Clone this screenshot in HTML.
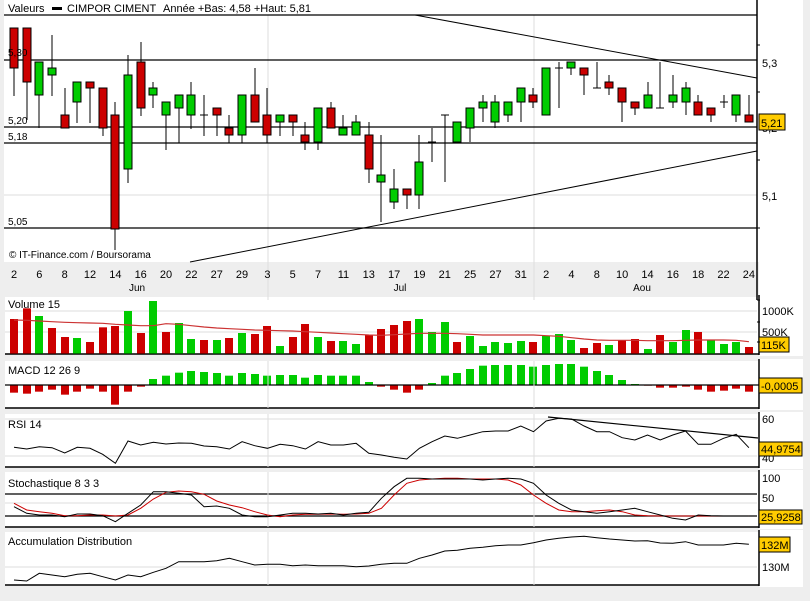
<!DOCTYPE html>
<html><head><meta charset="utf-8"><style>
body{margin:0;background:#eeeeee;width:810px;height:601px;overflow:hidden;font-family:"Liberation Sans",sans-serif}
svg{position:absolute;left:0;top:0}
text{font-family:"Liberation Sans",sans-serif;font-size:11px;fill:#000}
</style></head><body>
<svg id="s" width="810" height="601" xmlns="http://www.w3.org/2000/svg"></svg>
<script>
var o=[];
function X(i){return 14+12.67*i}
function r(x,y,w,h,f){o.push('<rect x="'+x+'" y="'+y+'" width="'+w+'" height="'+h+'" fill="'+f+'"/>')}
function l(x1,y1,x2,y2,c,w){o.push('<line x1="'+x1+'" y1="'+y1+'" x2="'+x2+'" y2="'+y2+'" stroke="'+(c||'#000')+'" stroke-width="'+(w||1)+'"/>')}
function t(x,y,s,a){o.push('<text x="'+x+'" y="'+y+'"'+(a||'')+'>'+s+'</text>')}
function pl(pts,c,w){o.push('<polyline fill="none" stroke="'+c+'" stroke-width="'+(w||1)+'" points="'+pts.join(' ')+'"/>')}
var R='#cc0000',G='#00cc00';
// backgrounds
r(4,0,756,262,'#fff');r(4,262,756,33,'#eeeeee');r(759,0,44,300,'#fff');
[[297,354],[361,408],[414,467],[472,527],[532,585]].forEach(function(p){r(5,p[0],754,p[1]-p[0],'#fff');r(759,p[0]-2,44,p[1]-p[0]+4,'#fff');l(759,p[0]-2,759,p[1]+1,'#000',1.5);l(5,p[1],759,p[1],'#000',1.5)});
// main grid
l(268,15,268,300,'#ddd');l(534,15,534,300,'#ddd');l(4,195,757,195,'#ddd');
l(757,0,757,300,'#000',1.5);
[15,60,127,143,228].forEach(function(y){l(4,y,757,y,'#000',1.2)});
l(415,15,757,78,'#000',1);l(190,262,757,151,'#000',1);
// candles
var C=[[28,68,28,96,'r'],[28,82,28,120,'r'],[62,95,62,128,'g'],[68,75,35,96,'g'],[115,128,88,128,'r'],[82,102,82,123,'g'],[82,88,82,123,'r'],[88,128,88,136,'r'],[115,229,102,250,'r'],[75,169,55,183,'g'],[62,108,42,116,'r'],[88,95,82,108,'g'],[102,115,102,150,'g'],[95,108,95,143,'g'],[95,115,82,129,'g'],[115,115,95,136,'x'],[108,115,108,136,'r'],[128,135,115,143,'r'],[95,135,95,143,'g'],[95,122,68,122,'r'],[115,135,88,143,'r'],[115,122,115,136,'g'],[115,122,115,136,'r'],[135,142,122,150,'r'],[108,142,108,150,'g'],[108,128,102,128,'r'],[128,135,115,135,'g'],[122,135,115,135,'g'],[135,169,122,183,'r'],[175,182,135,222,'g'],[189,202,169,209,'g'],[189,195,189,209,'r'],[162,195,135,209,'g'],[142,142,128,162,'x'],[115,115,115,182,'x'],[122,142,122,142,'g'],[108,128,108,142,'g'],[102,108,95,122,'g'],[102,122,95,128,'g'],[102,115,102,122,'g'],[88,102,88,122,'g'],[95,102,88,108,'r'],[68,115,68,115,'g'],[68,68,62,108,'x'],[62,68,62,75,'g'],[68,75,68,95,'r'],[88,88,62,88,'x'],[82,88,75,95,'r'],[88,102,88,122,'r'],[102,108,102,115,'r'],[95,108,82,108,'g'],[108,108,62,108,'x'],[95,102,75,108,'g'],[88,102,82,115,'g'],[102,115,95,115,'r'],[108,115,108,122,'r'],[102,102,95,108,'x'],[95,115,95,122,'g'],[115,122,95,122,'r']];
C.forEach(function(c,i){var x=Math.round(X(i));l(x,c[2],x,c[3]);if(c[4]=='x'){l(x-4,c[0],x+4,c[0])}else{o.push('<rect x="'+(x-4)+'" y="'+c[0]+'" width="8" height="'+Math.max(c[1]-c[0],2)+'" fill="'+(c[4]=='r'?R:G)+'" stroke="#000" stroke-width="1"/>')}});
// texts main
t(8,12,'Valeurs');r(52,7,10,3,'#000');t(67,12,'CIMPOR CIMENT');t(163,12,'Année +Bas: 4,58 +Haut: 5,81');
t(8,56,'5,30',' style="font-size:10px"');t(8,124,'5,20',' style="font-size:10px"');t(8,140,'5,18',' style="font-size:10px"');t(8,225,'5,05',' style="font-size:10px"');
t(9,258,'© IT-Finance.com / Boursorama',' style="font-size:10px"');
var L=['2','6','8','12','14','16','20','22','27','29','3','5','7','11','13','17','19','21','25','27','31','2','4','8','10','14','16','18','22','24'];
L.forEach(function(s,k){t(14+25.34*k,278,s,' text-anchor="middle"')});
t(137,291,'Jun',' text-anchor="middle" style="font-size:10px"');t(400,291,'Jul',' text-anchor="middle" style="font-size:10px"');t(642,291,'Aou',' text-anchor="middle" style="font-size:10px"');
t(762,67,'5,3');t(762,132,'5,2');t(762,200,'5,1');
[45,92,160,228].forEach(function(y){l(757,y,760,y)});
function box(x,y,w,h,s){o.push('<rect x="'+x+'" y="'+y+'" width="'+w+'" height="'+h+'" fill="#ffcc00" stroke="#000"/>');t(x+2,y+h-3,s)}
box(759,114,26,16,'5,21');
// volume
var V=[[72,'r'],[40,'r'],[63,'g'],[99,'r'],[126,'r'],[129,'g'],[141,'r'],[97,'r'],[93,'r'],[48,'g'],[114,'r'],[18,'g'],[111,'r'],[84,'g'],[132,'g'],[135,'r'],[135,'g'],[129,'r'],[114,'g'],[117,'r'],[93,'r'],[153,'g'],[126,'r'],[87,'r'],[126,'g'],[138,'r'],[138,'g'],[147,'g'],[120,'r'],[102,'r'],[90,'r'],[78,'r'],[72,'g'],[111,'g'],[81,'g'],[141,'r'],[123,'g'],[153,'g'],[141,'g'],[144,'g'],[138,'g'],[141,'r'],[123,'g'],[117,'g'],[135,'g'],[159,'r'],[144,'r'],[150,'g'],[135,'r'],[132,'r'],[162,'g'],[120,'r'],[141,'g'],[105,'g'],[111,'r'],[135,'g'],[147,'g'],[141,'g'],[156,'r']];
function Y(z){return 295+z/3}
l(5,311,757,311,'#ddd');l(5,332,757,332,'#ddd');
V.forEach(function(v,i){var y=Y(v[0]);r(Math.round(X(i))-4,y,8,353.5-y,v[1]=='r'?R:G)});
var vm=[75,76,78,80,82,83,84,85,88,90,92,92,86,88,92,96,99,101,103,105,106,107,108,110,112,114,116,118,120,121,119,117,115,115,115,116,118,120,120,120,120,120,122,124,128,132,135,136,136,136,137,137,137,136,135,135,135,136,140];
pl(vm.map(function(z,i){return X(i).toFixed(1)+','+Y(z).toFixed(1)}),'#cc3333',1.2);
t(8,308,'Volume 15');t(762,315,'1000K');t(762,336,'500K');box(759,337,30,15,'115K');
[300,322,342].forEach(function(y){l(757,y,760,y)});
// macd
var M=[293,296,290,284,299,290,281,290,329,290,275,252,242,233,228,231,234,242,234,237,242,240,240,248,240,242,242,242,261,275,284,293,284,264,242,234,222,212,210,210,210,215,210,207,207,215,228,240,255,267,272,278,278,275,284,290,287,281,290];
M.forEach(function(z,i){var y=Y(z),x=Math.round(X(i))-4;if(z>270)r(x,385,8,y-385,R);else r(x,y,8,385-y,G)});
l(5,385,759,385,'#000',1.2);l(534,361,534,408,'#ddd');l(268,361,268,408,'#ddd');
t(8,374,'MACD 12 26 9');box(759,378,43,15,'-0,0005');
// rsi
l(5,419,757,419,'#ddd');l(5,456,757,456,'#ddd');l(268,414,268,467,'#ddd');l(534,414,534,467,'#ddd');
var RS=[457,462,455,458,474,457,460,478,505,438,450,442,447,444,445,453,455,462,440,452,460,448,452,462,440,450,450,445,475,480,487,492,460,440,423,430,420,410,408,408,393,410,378,370,372,393,410,410,428,435,420,435,420,408,448,448,430,418,458];
pl(RS.map(function(z,i){return X(i).toFixed(1)+','+Y(z).toFixed(1)}),'#000',1);
l(548,417,758,438,'#000',1.2);
t(8,428,'RSI 14');t(762,423,'60');t(762,462,'40');box(759,442,43,14,'44,9754');
// stoch
l(5,494,757,494,'#000',1.2);l(5,503,757,503,'#ddd');l(5,516,757,516,'#000',1.2);l(268,472,268,527,'#ddd');l(534,472,534,527,'#ddd');
var SB=[635,655,660,660,665,657,657,662,680,655,630,590,590,595,600,635,633,640,660,665,665,660,655,655,657,655,660,655,652,610,575,550,550,552,552,552,552,555,552,550,552,565,600,625,645,650,655,650,645,640,650,660,670,675,660,662,663,663,663];
var SR=[625,645,650,655,662,662,660,660,663,660,640,612,592,588,590,598,618,630,638,650,660,665,660,658,658,657,658,657,655,640,600,565,555,552,550,550,552,552,552,555,570,600,625,645,650,650,647,645,650,660,662,663,663,663,663,663,663,663,663];
pl(SR.map(function(z,i){return X(i).toFixed(1)+','+Y(z).toFixed(1)}),'#cc0000',1);
pl(SB.map(function(z,i){return X(i).toFixed(1)+','+Y(z).toFixed(1)}),'#000',1);
t(8,487,'Stochastique 8 3 3');t(762,482,'100');t(762,502,'50');box(759,510,43,14,'25,9258');
// AD
l(5,567,757,567,'#ddd');l(268,532,268,585,'#ddd');l(534,532,534,585,'#ddd');
var AD=[855,858,835,840,845,838,835,845,855,840,845,832,820,800,800,800,797,790,800,810,808,808,812,810,812,812,812,815,813,808,805,805,790,780,768,766,760,757,752,750,750,743,735,730,726,724,728,732,735,738,737,744,745,740,750,750,750,745,748];
pl(AD.map(function(z,i){return X(i).toFixed(1)+','+Y(z).toFixed(1)}),'#000',1);
t(8,545,'Accumulation Distribution');box(759,537,31,15,'132M');t(762,571,'130M');
document.getElementById('s').innerHTML=o.join('');
</script>
</body></html>
